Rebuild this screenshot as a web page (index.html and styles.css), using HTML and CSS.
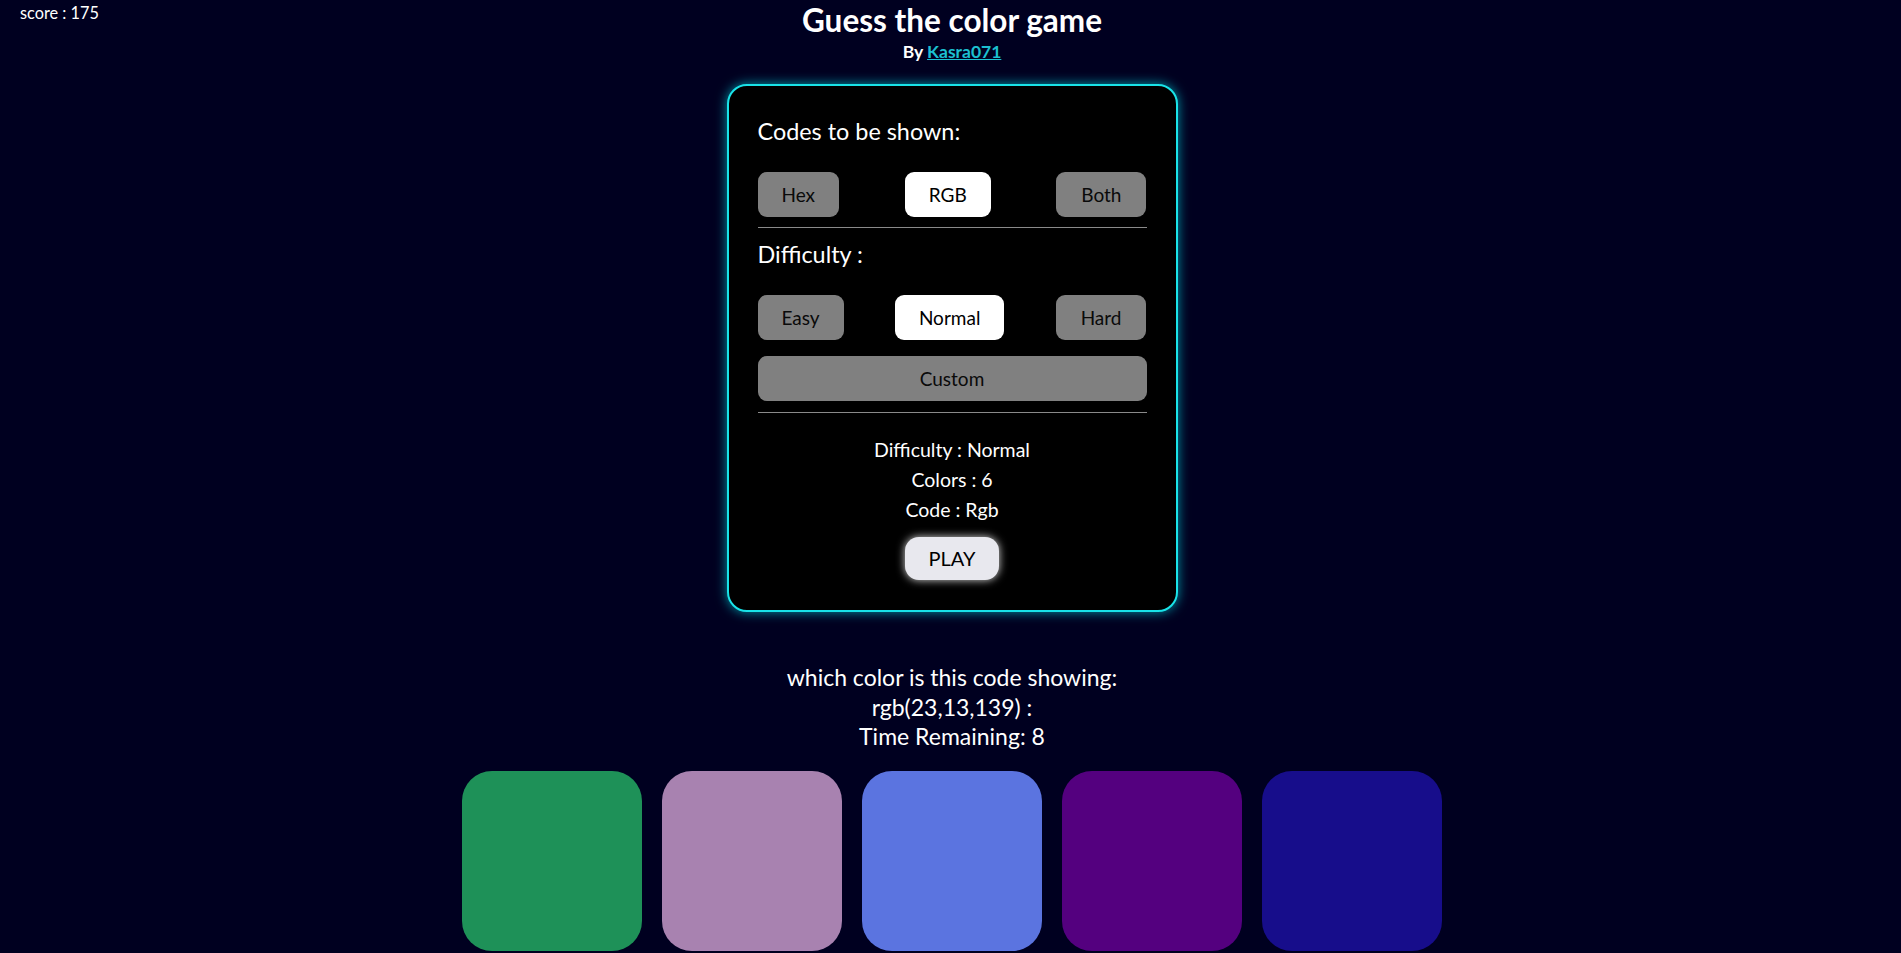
FILE: index.html
```html
<!DOCTYPE html>
<html lang="en">
<head>
<meta charset="utf-8">
<title>Guess the color game</title>
<link rel="stylesheet" href="styles.css">
</head>
<body>
<header class="top">
  <div class="score">score : 175</div>
  <div class="brand">
    <h1 class="title">Guess the color game</h1>
    <div class="byline">By <a href="#" class="author">Kasra071</a></div>
  </div>
  <div></div>
</header>

<main class="main">
  <section class="card">
    <h2 class="card-heading">Codes to be shown:</h2>
    <div class="btn-row">
      <button class="opt">Hex</button>
      <button class="opt active">RGB</button>
      <button class="opt">Both</button>
    </div>
    <hr class="divider">
    <h2 class="card-heading">Difficulty :</h2>
    <div class="btn-row">
      <button class="opt">Easy</button>
      <button class="opt active">Normal</button>
      <button class="opt">Hard</button>
    </div>
    <button class="opt wide">Custom</button>
    <hr class="divider">
    <div class="info">
      <p>Difficulty : Normal</p>
      <p>Colors : 6</p>
      <p>Code : Rgb</p>
    </div>
    <button class="play">PLAY</button>
  </section>

  <section class="question">
    <p>which color is this code showing:</p>
    <p>rgb(23,13,139) :</p>
    <p>Time Remaining: 8</p>
  </section>

  <section class="swatches">
    <div class="swatch" style="background:#1e9158"></div>
    <div class="swatch" style="background:#a882b0"></div>
    <div class="swatch" style="background:#5b74e0"></div>
    <div class="swatch" style="background:#54007f"></div>
    <div class="swatch" style="background:#170d8b"></div>
  </section>
</main>
</body>
</html>
```

FILE: styles.css
```css
* { box-sizing: border-box; }

html, body {
  margin: 0;
  background: #000020;
}

body {
  font-family: "Lato", "Noto Sans", sans-serif;
  color: #ffffff;
  padding: 2px 0 0 3px;
  overflow: hidden;
}

.top {
  display: grid;
  grid-template-columns: 1fr auto 1fr;
  align-items: start;
}

.score {
  font-size: 16.3px;
  line-height: 20px;
  padding-left: 17px;
  padding-top: 1px;
}

.brand {
  text-align: center;
}

.title {
  margin: 0;
  font-size: 31.5px;
  line-height: 37px;
  font-weight: 700;
}

.byline {
  margin-top: 3px;
  font-size: 17.5px;
  line-height: 20px;
  font-weight: 700;
}

.author {
  color: #1cc0d0;
  text-decoration: underline;
}

.main {
  display: flex;
  flex-direction: column;
  align-items: center;
}

.card {
  margin-top: 22px;
  width: 451px;
  background: #000;
  border: 2px solid #19e3e8;
  border-radius: 20px;
  box-shadow: 0 0 12px rgba(0, 230, 240, 0.65);
  padding: 31px 29px 30px;
  display: flex;
  flex-direction: column;
}

.card-heading {
  margin: 0;
  font-size: 23.4px;
  line-height: 28px;
  font-weight: 400;
}

.btn-row {
  display: flex;
  justify-content: space-between;
  margin-top: 27px;
}

.opt {
  font-family: inherit;
  font-size: 19px;
  line-height: 23px;
  padding: 11px 24px;
  border: none;
  border-radius: 9px;
  background: #808080;
  color: #0a0a0a;
}

.opt:last-child {
  padding: 11px 25px;
}

.opt.active {
  background: #ffffff;
  color: #000;
}

.opt.wide {
  width: 100%;
  margin-top: 16px;
}

.divider {
  border: none;
  border-top: 1px solid #8a8a8a;
  margin: 10px 0 12px;
  height: 0;
}

.opt.wide + .divider {
  margin: 11px 0 22px;
}

.info {
  text-align: center;
}

.info p {
  margin: 0;
  font-size: 19.5px;
  line-height: 30px;
}

.play {
  align-self: center;
  margin-top: 12px;
  font-family: inherit;
  font-size: 20px;
  line-height: 25px;
  padding: 9px 24px;
  border: none;
  border-radius: 14px;
  background: #e8e8ee;
  color: #000;
  box-shadow: 0 0 8px rgba(255, 255, 255, 0.85);
}

.question {
  margin-top: 51px;
  text-align: center;
  font-family: "Comic Sans MS", "Lato", sans-serif;
}

.question p {
  margin: 0;
  font-size: 23px;
  line-height: 29.5px;
}

.swatches {
  display: flex;
  justify-content: center;
  margin-top: 19px;
  width: 1000px;
}

.swatch {
  width: 180px;
  height: 180px;
  margin: 0 10px;
  border-radius: 30px;
}
```
